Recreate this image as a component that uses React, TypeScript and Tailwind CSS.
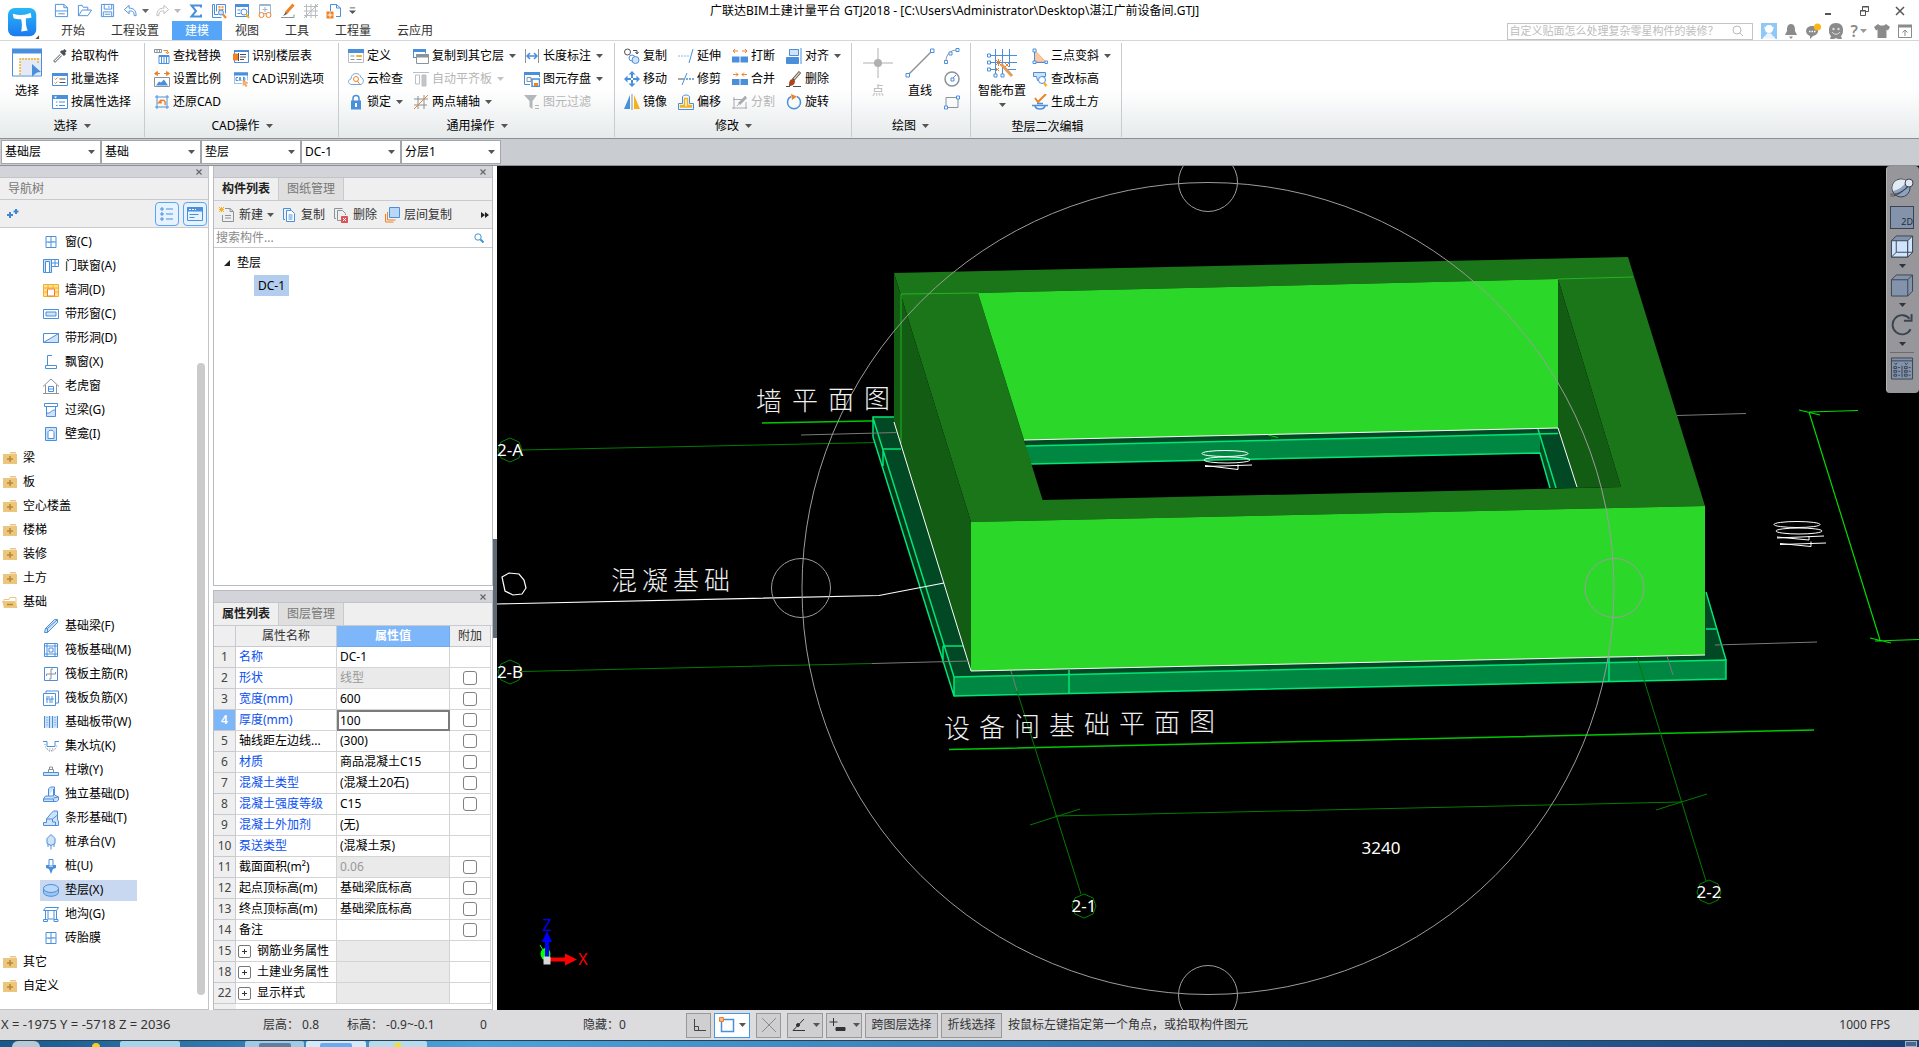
import { Fragment } from "react";
import type { ReactNode } from "react";

const B = "#4a8fdc";
const L = "#cfe2f7";
const O = "#f08124";
const Y = "#f5b21c";
const G = "#8b9298";
const D = "#4a4f55";

// 16x16 drawings used by the ribbon, the tree and the panel toolbars
const ICONS: Record<string, ReactNode> = {
  newFile: <path d="M1.500 1.500h9l4 3.500v9.500h-13zM10.500 1.500V5h4M1.500 8.500h13M4.500 11.500h7" stroke={B} fill="none" />,
  open: <path d="M1.500 13.500v-11h4l1 2h5v3M1.500 13.500l4-6h10l-4 6z" stroke={B} fill="none" />,
  save: <path d="M1.500 1.500h13v13h-13zM4.500 1.500v5h8v-5M9.500 3v2M3.500 14V9.500h9V14M5 12h6" stroke={B} fill="none" />,
  undo: <path d="M6.500 2.500l-5 4.500 5 4.500v-3c4 0 5 0 5.500 5h2c0-6-3-8-7.500-8z" stroke={B} fill="none" />,
  redo: <path d="M9.500 2.500l5 4.500-5 4.500v-3c-4 0-5 0-5.500 5h-2c0-6 3-8 7.500-8z" stroke="#b9bcc0" fill="none" />,
  sigma: <path d="M13 4.500V2.500H3.500L8 8l-4.500 5.500H13v-2" stroke={B} strokeWidth="2" fill="none" />,
  measure: (
    <g fill="none" stroke={B}>
      <path d="M5.500 1.500h9v9M1.500 1.500v13h9M1.500 1.500h2v10h4M5.500 1.500v7" />
      <path d="M7.500 4h5M7.500 6.500h5" stroke={O} strokeDasharray="2 1" strokeWidth="1.500" />
      <circle cx="10" cy="9.500" r="2.500" fill={L} />
      <path d="M12 11.500l3 3.500" stroke={O} strokeWidth="2" />
    </g>
  ),
  findWin: (
    <g fill="none" stroke={B}>
      <path d="M1.500 1.500h13v12h-13z" />
      <path d="M1 2.500h14" strokeWidth="3" />
      <path d="M3.500 7h3M3.500 10.500h3" />
      <circle cx="10" cy="9" r="3" fill="#fff" />
      <path d="M12 11l3 4" stroke={Y} strokeWidth="2" />
    </g>
  ),
  glasses: (
    <g fill="none" stroke="#9fb4cf">
      <path d="M2.500 1.500h11v9h-11zM2 2.500h12M8 4v5M5.500 6.500h5" />
      <circle cx="4.500" cy="12" r="2.500" stroke={O} fill="#fff" />
      <circle cx="11.500" cy="12" r="2.500" stroke={O} fill="#fff" />
    </g>
  ),
  pen: (
    <g fill="none">
      <path d="M13.500 1.500L6 10" stroke={O} strokeWidth="3" />
      <path d="M6 9l-3 4 4-2z" fill={D} />
      <path d="M1 14.500h13v-3" stroke={G} />
    </g>
  ),
  mesh: <path d="M1 3.500h14M1 8h14M1 12.500h14M3.500 1v14M8 1v14M12.500 1v14M1 15L15 1" stroke="#b9bcc0" fill="none" />,
  addDoc: (
    <g fill="none" stroke={B}>
      <path d="M4.500 8V1.500h6l4 3.500v8.500H10M10.500 1.500V5h4" />
      <rect x="0.500" y="8.500" width="7" height="7" fill={O} stroke="none" />
      <path d="M4 9.500v5M1.500 12h5" stroke="#fff" />
    </g>
  ),
  picker: (
    <g fill="none">
      <path d="M9 7l-7 7" stroke={G} strokeWidth="3" />
      <path d="M9 7l-6 6" stroke="#fff" />
      <path d="M9 3l4 4M13.500 2L10 6" stroke={D} strokeWidth="3" />
    </g>
  ),
  batch: (
    <g fill="none" stroke={B}>
      <path d="M.5 2.500h15v12H.5z" fill="#fff" />
      <path d="M0 3.500h16" strokeWidth="3" />
      <path d="M2.500 7.500l1 1 2-2M2.500 11.500l1 1 2-2" stroke={O} />
      <path d="M7.500 8h6M7.500 11.500h6" stroke={D} />
    </g>
  ),
  byProp: (
    <g fill="none" stroke={B}>
      <path d="M.5 1.500h15v13H.5z" fill="#fff" />
      <path d="M0 3h16" strokeWidth="4" />
      <path d="M2 2.500h3L3.500 4.500z" fill="#fff" stroke="none" />
      <path d="M4 8h1.500M4 11.500h1.500M7 8h6M7 11.500h6" />
    </g>
  ),
  replace: (
    <g fill="none">
      <path d="M.5 1.500h7v3h-7zM3 1v3M5.500 1v3" stroke={G} />
      <path d="M9.500 2.500h4v2M12 4l1.500 2L15 4" stroke={O} />
      <path d="M5 7.500h10v8h-10z" stroke={B} fill="#fff" />
      <path d="M5 8h10" stroke={B} strokeWidth="2" />
      <path d="M7.500 9v6M10 9v6M12.500 9v6" stroke={B} />
    </g>
  ),
  floorTbl: (
    <g fill="none" stroke={B}>
      <path d="M1.500 2.500h14v12h-14z" fill="#fff" />
      <path d="M1 3h15" strokeWidth="2" />
      <path d="M.5 6h4v6h-4z" fill={O} stroke={O} />
      <path d="M7 6.500h6M7 9h6M7 11.500h4M5.500 5v8" stroke={D} />
    </g>
  ),
  scale: (
    <g fill="none">
      <path d="M2 2.500h4M10 2.500h4M3.500 .5l-3 2 3 2zM12.500 .5l3 2-3 2z" stroke={O} fill={O} />
      <path d="M.5 6.500h15v9H.5z" stroke={G} fill="#fff" />
      <path d="M2 14.500l3-4 2 1 3-3 4 6z" fill={B} />
    </g>
  ),
  cadOpt: (
    <g fill="none" stroke={B}>
      <path d="M1.500 12.500v-11h13v8M1 12.500h8" strokeOpacity=".5" />
      <path d="M1 3h14" strokeWidth="3" />
      <path d="M5 6.500H3v3h2M6 10l1-4 1 4M10.500 6v4c2 0 2-4 0-4" />
      <path d="M10 9l5 3-2.500.5 1.500 2.500-1.500.5-1-2.500-1.500 1.500z" fill="#f7b58a" stroke={O} strokeWidth=".5" />
    </g>
  ),
  restore: (
    <g fill="none">
      <path d="M3 1v14M13 1v14M1 3h14M1 13h14" stroke={B} />
      <path d="M7 5L3 9.500h5z" fill={O} />
      <path d="M6 7c4-2 6 0 5 4" stroke={O} strokeWidth="1.500" />
    </g>
  ),
  define: (
    <g fill="none" stroke="#b8bdc4">
      <path d="M.5 1.500h15v13H.5z" fill="#fff" />
      <path d="M0 3h16" stroke={B} strokeWidth="4" />
      <path d="M2.500 8h4M2.500 11.500h4" stroke={G} />
      <path d="M8.500 7.500h5v1h-5z" fill={Y} stroke={Y} />
      <path d="M8.500 11.500h5" stroke={G} />
    </g>
  ),
  cloud: (
    <g fill="none" stroke="#6aa6e8">
      <path d="M4 13.500c-4.500 0-4.500-5-1-5.500 0-7 9-7 10-1.500 3.500 1 3 7-1 7z" />
      <circle cx="8" cy="8" r="2.500" stroke={O} />
      <path d="M9.500 10l2 3" stroke={O} />
    </g>
  ),
  lock: (
    <g>
      <path d="M5 7V4.500c0-4 6-4 6 0V7" stroke={B} strokeWidth="1.500" fill="none" />
      <path d="M3 6.500h10v9H3z" fill={B} />
      <path d="M8 9v4" stroke="#fff" strokeWidth="2" />
    </g>
  ),
  copyFloor: (
    <g fill="none">
      <path d="M.5 9.500v-8h12v4M0 9.500h3" stroke={B} />
      <path d="M0 2.500h13" stroke={B} strokeWidth="3" />
      <path d="M3.500 6.500h12v9h-12z" stroke={G} fill="#fff" />
      <path d="M3 8h13" stroke={G} strokeWidth="3" />
    </g>
  ),
  align: (
    <g fill="none" stroke="#bcbfc2">
      <path d="M0 1.500h16M2.500 4v9h4V4z" />
      <path d="M9 4h4v11H9z" fill="#c4c7ca" />
    </g>
  ),
  axis: (
    <g fill="none" stroke={G}>
      <path d="M1 5h14M1 11h13M5 2v13M11 1v14" />
      <path d="M1 15L15 1" stroke={O} />
    </g>
  ),
  dim: <path d="M1.500 1v14M14.500 1v14" stroke={G} fill="none" />,
  dimArrow: <path d="M3 8h10M6 5L3 8l3 3M10 5l3 3-3 3" stroke={B} strokeWidth="1.500" fill="none" />,
  store: (
    <g fill="none" stroke={B}>
      <path d="M6 13.500H.5v-12h15V6" />
      <path d="M0 2.500h16" strokeWidth="3" />
      <path d="M3 6.500h4v4H3z" stroke={G} />
      <path d="M8 8h7.500v7.500H8z" fill="#fff" strokeWidth="1.500" />
      <path d="M10 12h4v3h-4z" fill={O} stroke="none" />
    </g>
  ),
  filter: (
    <g>
      <path d="M0 1h13L8.500 7v8l-3-2V7z" fill="#b4b7ba" />
      <path d="M11 11.500h4M11 14.500h4" stroke="#b4b7ba" />
    </g>
  ),
  copy: (
    <g fill="none">
      <circle cx="3.500" cy="4" r="3" stroke={D} />
      <circle cx="8" cy="10" r="3" stroke={B} />
      <circle cx="11.500" cy="12" r="3.500" stroke={B} fill={L} />
      <path d="M9 2.500h4v3M11.500 4l1.500 2 1.500-2" stroke={D} />
    </g>
  ),
  move: (
    <g fill={B}>
      <path d="M8 0l3.500 3.500h-7zM8 16l3.500-3.500h-7zM0 8l3.500-3.500v7zM16 8l-3.500-3.500v7z" />
      <path d="M8 3v4M8 9v4M3 8h4M9 8h4" stroke={B} strokeWidth="2" />
    </g>
  ),
  mirror: (
    <g>
      <path d="M6 1v14H0z" fill={B} />
      <path d="M10 1v14h6z" fill={Y} />
      <path d="M8 0v16" stroke={G} />
    </g>
  ),
  extend: (
    <g fill="none">
      <path d="M0 8h11" stroke="#8fb4e0" strokeDasharray="2 1" />
      <path d="M15 1l-4 14" stroke={B} />
    </g>
  ),
  trim: (
    <g fill="none">
      <path d="M0 8h6" stroke={D} />
      <path d="M8 8h8" stroke={B} strokeWidth="1.500" strokeDasharray="2 1" />
      <path d="M9 2L4 14" stroke={B} />
    </g>
  ),
  offset: (
    <g fill="none">
      <path d="M.5 9.500h4v-7c2-2 5-2 7 0v7h4v6H.5z" stroke={B} />
      <path d="M2.500 13h11v-1.500h-4V4.500h-3v7h-4z" stroke={Y} strokeWidth="1.500" />
    </g>
  ),
  brk: (
    <g>
      <path d="M0 8.500h7.500v6H0zM8.500 8.500H16v6H8.500z" fill={B} />
      <path d="M1 3h5M10 3h5M3 1L1 3l2 2M13 1l2 2-2 2" stroke={O} fill="none" />
    </g>
  ),
  merge: (
    <g>
      <path d="M0 8h7.500v6H0zM8.500 8H16v6H8.500z" fill={B} />
      <path d="M1 3.500h5M10 3.500h5M4 1.500l2 2-2 2M12 1.500l-2 2 2 2" stroke={O} fill="none" />
    </g>
  ),
  split: (
    <g fill="none" stroke="#a9acaf">
      <path d="M1 5.500h9M0 14h15M2 3v12M14 8v7M5 12L14 2" />
      <path d="M7 10l7-7" strokeWidth="3" />
    </g>
  ),
  alignR: (
    <g stroke={B}>
      <path d="M3.500 1.500h9v6h-9z" fill={L} />
      <path d="M.5 9.500h12v6H.5z" fill={B} />
      <path d="M15 0v16" />
    </g>
  ),
  erase: (
    <g>
      <path d="M14 1L7 9" stroke={D} strokeWidth="3" />
      <path d="M13.500 1.500L8 8" stroke="#e9c9a0" strokeWidth="1.500" />
      <path d="M7 8l2 2c0 4-3 5-6 5 0-3 0-7 4-7z" fill="#a8481c" />
      <path d="M0 15.500h4M7 15.500h8" stroke={D} />
    </g>
  ),
  rotate: (
    <g fill="none">
      <path d="M11 2.500a6.500 6.500 0 1 1-6 0" stroke={B} strokeWidth="1.500" />
      <path d="M5 0l6 2.500L6 6z" fill={O} />
    </g>
  ),
  arc: (
    <g fill="none">
      <path d="M2 13C2 7 6 2 13 2" stroke={G} />
      <path d="M.5 12.500h3v3h-3zM5 4h3v3H5zM12 .5h3v3h-3z" stroke={B} fill="#fff" />
    </g>
  ),
  circle: (
    <g fill="none">
      <circle cx="8" cy="8" r="7" stroke={G} strokeWidth="1.500" />
      <path d="M7 7h3v3H7zM9 7l3-3" stroke={B} />
    </g>
  ),
  rect: (
    <g fill="none">
      <path d="M2 3.500h12v10H2z" stroke={G} />
      <path d="M12.500 2h3v3h-3zM.5 12h3v3h-3z" stroke={B} fill="#fff" />
    </g>
  ),
  slope: (
    <g>
      <path d="M2.500 2v12H14z" fill="#f8c8a8" stroke={O} strokeWidth=".5" />
      <path d="M1 1h3v3H1zM1 13h3v2.500H1zM13 13h2.500v2.500H13zM2.500 4v9M4 14.500h9" stroke={B} fill="#fff" />
    </g>
  ),
  level: (
    <g fill="none" stroke={B}>
      <path d="M1.500 1.500h12v4h-3l-1 4h-4l-1-4h-3z" fill={L} />
      <circle cx="10" cy="9" r="3.500" fill="#fff" />
      <path d="M12 12l2.500 3" stroke={Y} strokeWidth="2.500" />
    </g>
  ),
  earth: (
    <g fill="none">
      <path d="M3 4l3 4 8-8" stroke={O} strokeWidth="2" />
      <path d="M0 11.500h16M3 12c1 4 9 4 10 0M5 9.500h6" stroke={B} strokeWidth="1.500" />
    </g>
  ),
  win: <path d="M3 2.500h10v11H3zM8 2.500v11M3 8h10M6 8v1M10 7v1" stroke={B} fill="#fff" />,
  doorWin: (
    <g stroke={B}>
      <path d="M.5 1.500h8v13h-8z" fill={L} />
      <path d="M2.500 3.500h4v11h-4z" fill="#fff" />
      <path d="M8.500 1.500h7v7h-7zM12 2v6M9 5h6" fill="none" />
    </g>
  ),
  hole: (
    <g stroke={Y}>
      <path d="M.5 2.500h15v12H.5zM1 6h14M1 10h14M5 3v3M10 3v3" fill="#fde0a4" />
      <path d="M4.500 7h7v7h-7z" fill="#fff" stroke={O} />
    </g>
  ),
  strip: (
    <g stroke={B}>
      <path d="M.5 3.500h15v9H.5z" fill="#fff" />
      <path d="M3 6h10v4H3z" fill={L} />
    </g>
  ),
  stripHole: (
    <g stroke={B}>
      <path d="M.5 3.500h15v9H.5z" fill="#fff" />
      <path d="M.5 12.500l15-9v9z" fill={L} />
    </g>
  ),
  bay: <path d="M9 1.500H4.500v10M2.500 11.500h11v3h-11z" stroke={B} fill="none" />,
  house: (
    <g fill="none" stroke={G}>
      <path d="M0 8.500L8 1l8 7.500M2.500 7v8M13.500 7v8M0 15.500h16" />
      <path d="M5.500 8.500h5v5h-5zM6 11h4" stroke={B} />
    </g>
  ),
  lintel: (
    <g stroke={B} fill="none">
      <path d="M1.500 1.500h13v3h-13zM3.500 4.500h9v10h-9z" />
      <path d="M4 11c3 1 4-3 8-3v6H4z" fill={L} stroke="none" />
      <path d="M4 11c3 1 4-3 8-3" />
    </g>
  ),
  niche: (
    <g stroke={B}>
      <path d="M2.500 1.500h11v13h-11z" fill={L} />
      <path d="M5 12.500v-6c0-3 6-3 6 0v6z" fill="#fff" />
    </g>
  ),
  beam: <path d="M1.500 14.500l1-4 9-9h3v3l-10 10zM2.500 10.500h2v4M5 10l9-8" stroke={B} fill={L} />,
  raft: <path d="M1.500 1.500h13v13h-13zM1 4h14M1 12h14M4 1v14M12 1v14M6 6h4v4H6z" stroke={B} fill="none" />,
  raftMain: (
    <g fill="none">
      <path d="M1.500 1.500h13v13h-13z" stroke={B} />
      <path d="M8 3v10M3.500 8h9M8 3h2M3.500 10V8M12.500 6v2M6 13h2" stroke={G} />
    </g>
  ),
  raftNeg: (
    <g fill="none" stroke={B}>
      <path d="M.5 3.500h12v12H.5zM3 3V1h12.500v12H13" />
      <path d="M4 6v7M3 9h8M9 6v7M6 6v2M7 9v4" />
    </g>
  ),
  band: (
    <g>
      <path d="M1 2h14v12H1z" fill={L} />
      <path d="M1.500 2v12M6.500 2v12M9.500 2v12M14.500 2v12" stroke={B} />
      <path d="M4 3v10M12 3v10" stroke={B} strokeDasharray="1 1.500" />
    </g>
  ),
  pit: (
    <g fill="none" stroke={B}>
      <path d="M0 3.500h4v5h8v-5h4" />
      <path d="M2 6c0 9 12 9 12 0M4 11h8M6 13h5" stroke={G} strokeDasharray="1 1.500" />
    </g>
  ),
  pier: (
    <g fill="none">
      <path d="M.5 10.500h15v3H.5z" stroke={B} fill={L} />
      <path d="M5.500 10V7.500h5V10M6.500 7V5h3v2" stroke={G} />
    </g>
  ),
  isoFound: <path d="M.5 13l2-3h3V3l2-2h4v8l4 2v3l-2 1.500H.5zM5.500 10h5V3M10.500 12l5-1M.5 13h10v2" stroke={B} fill={L} />,
  stripFound: <path d="M.5 15.500v-3h3V9l4-5 3-3h4v9l1 1v4.500zM3.500 9h6v3h3v3M9.500 9l5-4" stroke={B} fill={L} />,
  pileCap: <path d="M8 .5l4 4v5l-4 2-4-2v-5zM8 11v4.500M5 10v3M11 10v3" stroke={B} fill={L} />,
  pile: (
    <g fill={B}>
      <path d="M6 1.500h4V8H6z" fill="#fff" stroke={B} />
      <path d="M3 7h3v2h4V7h3v3l-3 1-2 5-2-5-3-1z" />
    </g>
  ),
  cushion: (
    <g stroke={B}>
      <path d="M.5 6.500v4c1 5 14 5 15 0v-4" fill="#9cc5f2" />
      <ellipse cx="8" cy="6.500" rx="7.500" ry="4" fill="#b9d7f6" />
    </g>
  ),
  trench: <path d="M.5 4.500l2-3h13l-2 3zM2.500 4.500v9M5 5v8M11 5v8M13.500 5v9M.5 13.500h4v2h-4zM11 13.500h4v2h-4zM5 13h6" stroke={B} fill="none" />,
  folder: (
    <g>
      <path d="M1 4h14v10H1zM8 2h6v1.500H8z" fill="#ecc57f" />
      <path d="M8 6v6M5 9h6" stroke="#b8892f" strokeWidth="1.500" />
    </g>
  ),
  folderOpen: (
    <g>
      <path d="M2 13.500V5.500h5l1-2h6v10z" fill="none" stroke="#ecc57f" />
      <path d="M0 7h13l2.500 7H2.500z" fill="#ecc57f" />
      <path d="M5 10.500h6" stroke="#b8892f" strokeWidth="1.500" />
    </g>
  ),
  newItem: (
    <g fill="none" stroke={G}>
      <path d="M6 1.500h5l3.500 3v10h-11V8M11 1.500v3h3M6 8.500h6M6 11h6" />
      <path d="M0 0l5 5M5 0L0 5M2.500 0v5M0 2.500h5" stroke={Y} />
    </g>
  ),
  copyDoc: (
    <g fill="none" stroke={B}>
      <path d="M4 12.500H2.500v-11h7V3" />
      <path d="M5.500 3.500h5l3 3v8h-8zM7.500 8h4M7.500 10h4M7.500 12h4" fill="#fff" />
    </g>
  ),
  delDoc: (
    <g fill="none" stroke={G}>
      <path d="M3 11.500H1.500v-10h8" />
      <path d="M8 13.500H4.500v-10h5l3 3V8" />
      <path d="M8.500 9.500h6v6h-6z" fill="#d9555a" stroke="#d9555a" />
      <path d="M10 11l3 3M13 11l-3 3" stroke="#fff" />
    </g>
  ),
  layerCopy: (
    <g fill="none">
      <path d="M5.500 .5h10v10h-10z" stroke={B} fill="#b9d7f6" />
      <path d="M3.500 5v8h8M1.500 7v8h8" stroke={O} />
    </g>
  ),
};

function Ico({ name, className = "size-4" }: { name: string; className?: string }) {
  return (
    <svg viewBox="0 0 16 16" className={`${className} shrink-0`} aria-hidden="true">
      {ICONS[name]}
      {name === "dim" && ICONS.dimArrow}
    </svg>
  );
}

function Caret({ className = "text-[#555]" }: { className?: string }) {
  return (
    <svg viewBox="0 0 7 4" className={`h-1 w-[7px] shrink-0 ${className}`} aria-hidden="true">
      <path d="M0 0h7L3.500 4z" fill="currentColor" />
    </svg>
  );
}

type ToolItem = { icon: string; label: string; menu?: boolean; off?: boolean };

function Tool({ icon, label, menu, off }: ToolItem) {
  return (
    <button
      type="button"
      disabled={off}
      className={`flex h-[23px] items-center gap-[3px] whitespace-nowrap ${off ? "text-[#b5b5b5]" : "text-black"}`}
    >
      <Ico name={icon} />
      <span>{label}</span>
      {menu && <Caret className={off ? "ml-0.5 text-[#c4c4c4]" : "ml-0.5 text-[#555]"} />}
    </button>
  );
}

function Column({ items }: { items: ToolItem[] }) {
  return (
    <div className="flex flex-col items-start">
      {items.map((item) => (
        <Tool key={item.label} {...item} />
      ))}
    </div>
  );
}

function Group({ label, menu = true, className, children }: { label: string; menu?: boolean; className: string; children: ReactNode }) {
  return (
    <section className={`mt-0.5 mb-px flex shrink-0 flex-col border-r border-[#c9cccf] pt-px ${className}`}>
      <div className="flex h-[69px] items-start">{children}</div>
      <div className={`flex h-6 items-center justify-center gap-1.5 ${menu ? "pt-0.5 pr-2" : "pt-1 pr-1"}`}>
        {label}
        {menu && <Caret />}
      </div>
    </section>
  );
}

function BigTool({ label, off, menu, className = "w-[38px]", children }: { label: string; off?: boolean; menu?: boolean; className?: string; children: ReactNode }) {
  return (
    <button type="button" disabled={off} className={`flex flex-col items-center pt-1 whitespace-nowrap ${off ? "text-[#b5b5b5]" : ""} ${className}`}>
      <svg viewBox="0 0 30 30" className="size-[30px]" fill="none" aria-hidden="true">
        {children}
      </svg>
      <span className="mt-[5px]">{label}</span>
      {menu && <Caret className="mt-1 text-[#555]" />}
    </button>
  );
}

const TABS = ["开始", "工程设置", "建模", "视图", "工具", "工程量", "云应用"];

function TitleBar() {
  return (
    <header className="flex h-[41px] border-b border-[#d4d6d8] bg-white">
      <div className="flex w-12 shrink-0 items-start pt-2 pl-2">
        <svg viewBox="0 0 34 34" className="size-8" aria-hidden="true">
          <defs>
            <linearGradient id="logo" x1="0" y1="0" x2="0" y2="1">
              <stop offset="0" stopColor="#27b8f8" />
              <stop offset="1" stopColor="#1c7af0" />
            </linearGradient>
          </defs>
          <rect width="30" height="30" rx="7" fill="url(#logo)" />
          <path d="M5 6c7 2 13 2 19-1l1 5c-3 1-5 1-6 1 0 5 0 9 2 13l-7 1c1-4 1-9 0-13-4 0-6 0-8-1z" fill="#fff" />
          <path d="M33 29v4h-4z" fill="#555" />
        </svg>
      </div>
      <div className="flex shrink-0 flex-col">
        <div className="flex h-[22px] items-center pl-1.5">
          {["newFile", "open", "save", "undo"].map((name) => (
            <button key={name} type="button" aria-label={name} className="w-[23px]">
              <Ico name={name} className="size-[15px]" />
            </button>
          ))}
          <Caret className="-ml-1 text-[#666]" />
          <button type="button" aria-label="redo" className="ml-1.5">
            <Ico name="redo" className="size-[15px]" />
          </button>
          <Caret className="ml-1 text-[#bbb]" />
          <div className="ml-[7px] flex">
            {["sigma", "measure", "findWin", "glasses", "pen", "mesh", "addDoc"].map((name) => (
              <button key={name} type="button" aria-label={name} className="w-[23px]">
                <Ico name={name} className="size-4" />
              </button>
            ))}
          </div>
          <svg viewBox="0 0 8 8" className="size-[7px]" aria-hidden="true">
            <path d="M1 1h6" stroke="#555" />
            <path d="M0 4h8L4 8z" fill="#555" />
          </svg>
        </div>
        <nav className="flex">
          {TABS.map((tab) => (
            <button key={tab} type="button" className={`h-[19px] px-[13px] ${tab === "建模" ? "bg-[#55a5f8] text-white" : "text-[#333]"}`}>
              {tab}
            </button>
          ))}
        </nav>
      </div>
      <h1 className="min-w-0 flex-1 truncate pt-[3px] pl-[264px] text-xs">
        广联达BIM土建计量平台 GTJ2018 - [C:\Users\Administrator\Desktop\湛江广前设备间.GTJ]
      </h1>
      <div className="flex shrink-0 flex-col items-end pr-1.5">
        <div className="flex h-[22px] items-center gap-6 pr-[7px] text-[#555]">
          <button type="button" aria-label="最小化">
            <svg viewBox="0 0 12 12" className="size-3"><path d="M3 9h6" stroke="currentColor" strokeWidth="2" /></svg>
          </button>
          <button type="button" aria-label="还原">
            <svg viewBox="0 0 12 12" className="size-3" fill="none"><path d="M4.500 5V1.500h6v5H8M2.500 5.500h5v5h-5zM2 6h6M4 2h7" stroke="currentColor" /></svg>
          </button>
          <button type="button" aria-label="关闭">
            <svg viewBox="0 0 12 12" className="size-3"><path d="M2 2l8 8M10 2l-8 8" stroke="currentColor" strokeWidth="1.500" /></svg>
          </button>
        </div>
        <div className="flex h-[18px] items-center">
          <label className="mr-2 flex h-[17px] w-[246px] items-center border border-[#c4c4c4] px-0.5">
            <input aria-label="搜索" placeholder="自定义贴面怎么处理复杂零星构件的装修？" className="min-w-0 flex-1 text-[11px] outline-none placeholder:text-[#bdbdbd]" />
            <svg viewBox="0 0 12 12" className="mr-1.5 size-3" fill="none" stroke="#bbb"><circle cx="5" cy="5" r="4" /><path d="M8 8l3 3" /></svg>
          </label>
          <div className="flex items-center gap-[7px]">
            <svg viewBox="0 0 16 16" className="size-4"><path d="M0 0h16v16H0z" fill="#8fc7f7" /><circle cx="8" cy="6" r="4" fill="#fff" /><path d="M2 16c1-3 4-3 4-5h4c0 2 3 2 4 5zM3 5h10" fill="#e8f4fe" stroke="#fff" /></svg>
            <svg viewBox="0 0 14 16" className="h-4 w-3.5" fill="#8b8b8b"><path d="M7 1c4 0 4 4 4 7l2 4H1l2-4c0-3 0-7 4-7zM5 13.500h4L7 16z" /></svg>
            <svg viewBox="0 0 16 16" className="size-4"><path d="M7 3c8 0 8 9 1 10l-3 3v-3C-1 11 0 3 7 3z" fill="#8b8b8b" /><path d="M4 8.500h7" stroke="#fff" strokeWidth="1.500" strokeDasharray="1.500 1" /><circle cx="12.500" cy="4" r="3.500" fill="#fbb615" /></svg>
            <svg viewBox="0 0 16 16" className="size-4"><path d="M8 0c5 0 7 3 7 7s-1 5-2 6l1 3h-4l-2-1-2 1H2l1-3C2 12 1 11 1 7s2-7 7-7z" fill="#8b8b8b" /><circle cx="5.500" cy="6" r="1.200" fill="#ddd" /><circle cx="10.500" cy="6" r="1.200" fill="#ddd" /><path d="M4 9c2 3 6 3 8 0" stroke="#ddd" fill="none" /></svg>
            <button type="button" className="flex items-center gap-0.5 text-base leading-4 font-semibold text-[#8b8b8b]">?<Caret className="text-[#999]" /></button>
            <svg viewBox="0 0 16 16" className="size-4"><path d="M4 1l2 1.500h4L12 1l4 3-2 3.500-1.500-1V15h-9V6.500L2 7.500 0 4z" fill="#8b8b8b" /></svg>
            <svg viewBox="0 0 16 16" className="size-4" fill="none" stroke="#8b8b8b"><path d="M1.500 3.500h13v11h-13z" /><path d="M1 3h14" strokeWidth="3" /><path d="M8 13V7M5.500 9.500L8 7l2.500 2.500" /></svg>
          </div>
        </div>
      </div>
    </header>
  );
}

function Ribbon() {
  return (
    <div className="flex border-b border-[#8b9095] bg-linear-to-b from-white from-50% to-[#e6eaeb]">
      <Group label="选择" className="w-[145px] pl-2">
        <BigTool label="选择">
          <path d="M.5 2v26h29V2z" fill="#fff" stroke={B} />
          <path d="M8 10h21v17H8z" fill="#e4e9f5" />
          <path d="M0 3h30" stroke={B} strokeWidth="5" />
          <path d="M8 27V11h18v4" stroke={Y} strokeWidth="1.500" strokeDasharray="2 1" />
          <path d="M20 16l9 8-4 .5-5 4z" fill={B} />
        </BigTool>
        <div className="ml-1.5">
          <Column items={[{ icon: "picker", label: "拾取构件" }, { icon: "batch", label: "批量选择" }, { icon: "byProp", label: "按属性选择" }]} />
        </div>
      </Group>
      <Group label="CAD操作" className="w-[194px] pl-[9px]">
        <div className="flex gap-3">
          <Column items={[{ icon: "replace", label: "查找替换" }, { icon: "scale", label: "设置比例" }, { icon: "restore", label: "还原CAD" }]} />
          <Column items={[{ icon: "floorTbl", label: "识别楼层表" }, { icon: "cadOpt", label: "CAD识别选项" }]} />
        </div>
      </Group>
      <Group label="通用操作" className="w-[276px] pl-[9px]">
        <Column items={[{ icon: "define", label: "定义" }, { icon: "cloud", label: "云检查" }, { icon: "lock", label: "锁定", menu: true }]} />
        <div className="ml-2.5">
          <Column
            items={[
              { icon: "copyFloor", label: "复制到其它层", menu: true },
              { icon: "align", label: "自动平齐板", menu: true, off: true },
              { icon: "axis", label: "两点辅轴", menu: true },
            ]}
          />
        </div>
        <div className="ml-2">
          <Column items={[{ icon: "dim", label: "长度标注", menu: true }, { icon: "store", label: "图元存盘", menu: true }, { icon: "filter", label: "图元过滤", off: true }]} />
        </div>
      </Group>
      <Group label="修改" className="w-[237px] pl-[9px]">
        <div className="flex gap-[11px]">
          <Column items={[{ icon: "copy", label: "复制" }, { icon: "move", label: "移动" }, { icon: "mirror", label: "镜像" }]} />
          <Column items={[{ icon: "extend", label: "延伸" }, { icon: "trim", label: "修剪" }, { icon: "offset", label: "偏移" }]} />
          <Column items={[{ icon: "brk", label: "打断" }, { icon: "merge", label: "合并" }, { icon: "split", label: "分割", off: true }]} />
          <Column items={[{ icon: "alignR", label: "对齐", menu: true }, { icon: "erase", label: "删除" }, { icon: "rotate", label: "旋转" }]} />
        </div>
      </Group>
      <Group label="绘图" className="w-[119px] pl-[7px]">
        <BigTool label="点" off>
          <path d="M15 0v30M0 15h30" stroke="#b0b0b0" />
          <circle cx="15" cy="15" r="4" fill="#b0b0b0" />
        </BigTool>
        <BigTool label="直线" className="ml-1 w-[38px]">
          <path d="M3 27L27 3" stroke={G} strokeWidth="1.500" />
          <path d="M1 25.500h3.500V29H1zM25.500 1H29v3.500h-3.500z" stroke={B} fill="#fff" />
        </BigTool>
        <div className="ml-[5px] flex flex-col">
          {["arc", "circle", "rect"].map((name) => (
            <button key={name} type="button" aria-label={name} className="flex h-[23px] items-center">
              <Ico name={name} />
            </button>
          ))}
        </div>
      </Group>
      <Group label="垫层二次编辑" menu={false} className="w-[151px] pl-[7px]">
        <BigTool label="智能布置" menu className="w-12">
          <path d="M2 7.500h28M2 14.500h28M2 21.500h8M20 21.500h9M8.500 1v28M15.500 1v28M22.500 1v18" stroke={B} />
          <path d="M.5 6h3v3h-3zM.5 13h3v3h-3zM.5 20h3v3h-3zM7 26h3v3H7zM14 26h3v3h-3z" fill="#fff" stroke={B} />
          <path d="M14 16l11 12" stroke="#e59a57" strokeWidth="3" />
          <path d="M9 12l5 5M14 12l-5 5M11.500 11v7M18 15l4 4M22 15l-4 4M9 20l3 3M12 20l-3 3" stroke={O} />
        </BigTool>
        <div className="ml-1.5">
          <Column items={[{ icon: "slope", label: "三点变斜", menu: true }, { icon: "level", label: "查改标高" }, { icon: "earth", label: "生成土方" }]} />
        </div>
      </Group>
    </div>
  );
}

const SELECTORS = [
  { name: "楼层", value: "基础层" },
  { name: "类别", value: "基础" },
  { name: "类型", value: "垫层" },
  { name: "构件", value: "DC-1" },
  { name: "分层", value: "分层1" },
];

function SelectorBar() {
  return (
    <div className="flex h-[27px] items-center border-b border-[#8b9095] bg-[#c9ccd1] pl-px">
      {SELECTORS.map(({ name, value }) => (
        <div key={name} className="relative flex w-[100px] items-center">
          <select aria-label={name} className="h-6 w-full appearance-none border border-[#a3a6aa] bg-white pl-[3px] text-black">
            <option>{value}</option>
          </select>
          <Caret className="pointer-events-none absolute right-1.5 text-[#555]" />
        </div>
      ))}
    </div>
  );
}

type TreeRow = { label: string; icon?: string; open?: boolean };

const TREE: TreeRow[] = [
  { label: "窗(C)", icon: "win" },
  { label: "门联窗(A)", icon: "doorWin" },
  { label: "墙洞(D)", icon: "hole" },
  { label: "带形窗(C)", icon: "strip" },
  { label: "带形洞(D)", icon: "stripHole" },
  { label: "飘窗(X)", icon: "bay" },
  { label: "老虎窗", icon: "house" },
  { label: "过梁(G)", icon: "lintel" },
  { label: "壁龛(I)", icon: "niche" },
  { label: "梁" },
  { label: "板" },
  { label: "空心楼盖" },
  { label: "楼梯" },
  { label: "装修" },
  { label: "土方" },
  { label: "基础", open: true },
  { label: "基础梁(F)", icon: "beam" },
  { label: "筏板基础(M)", icon: "raft" },
  { label: "筏板主筋(R)", icon: "raftMain" },
  { label: "筏板负筋(X)", icon: "raftNeg" },
  { label: "基础板带(W)", icon: "band" },
  { label: "集水坑(K)", icon: "pit" },
  { label: "柱墩(Y)", icon: "pier" },
  { label: "独立基础(D)", icon: "isoFound" },
  { label: "条形基础(T)", icon: "stripFound" },
  { label: "桩承台(V)", icon: "pileCap" },
  { label: "桩(U)", icon: "pile" },
  { label: "垫层(X)", icon: "cushion" },
  { label: "地沟(G)", icon: "trench" },
  { label: "砖胎膜", icon: "win" },
  { label: "其它" },
  { label: "自定义" },
];

function DockHeader() {
  return (
    <div className="flex h-3 shrink-0 items-center justify-end border-b border-[#c3c4c9] bg-[#d3d4da] pr-1.5">
      <button type="button" aria-label="关闭面板">
        <svg viewBox="0 0 6 6" className="size-1.5"><path d="M.5 .5l5 5M5.500 .5l-5 5" stroke="#666" strokeWidth="1.200" /></svg>
      </button>
    </div>
  );
}

function NavTree() {
  return (
    <aside className="flex w-[209px] shrink-0 flex-col border-r border-b border-[#c3c4c9] bg-white">
      <DockHeader />
      <h2 className="flex h-[22px] shrink-0 items-center border-b border-[#c9cacf] bg-[#efefef] pl-2 text-[#777]">导航树</h2>
      <div className="flex h-7 shrink-0 items-center gap-1 border-b border-[#c9cacf] bg-[#efefef] pr-px pl-[7px]">
        <svg viewBox="0 0 12 12" className="mr-auto size-3" stroke="#3f86d8" strokeWidth="2"><path d="M3 4v6M0 7h6M9 1v5M6.500 3.500h5" /></svg>
        <button type="button" aria-label="列表" className="flex size-6 items-center justify-center rounded-sm border border-[#55a5f8] bg-[#e6f2fe]">
          <svg viewBox="0 0 14 14" className="size-3.5" fill="none" stroke={B}><path d="M1 1h2v2H1zM1 6h2v2H1zM1 11h2v2H1zM6 2h7M6 7h7M6 12h7" /></svg>
        </button>
        <button type="button" aria-label="窗口" className="flex size-6 items-center justify-center rounded-sm border border-[#55a5f8] bg-[#e6f2fe]">
          <svg viewBox="0 0 16 14" className="h-3.5 w-4" fill="none" stroke={B}><path d="M.5 .5h15v13H.5zM2.500 7.500h9M2.500 10.500h5" /><path d="M0 2.500h16" strokeWidth="4" /><path d="M2 2.500h7" stroke="#fff" strokeDasharray="2 1" /></svg>
        </button>
      </div>
      <div className="flex min-h-0 flex-1">
        <ul className="min-w-0 flex-1 overflow-hidden pt-0.5">
          {TREE.map(({ label, icon, open }) => (
            <li key={label} className={`flex h-6 items-center ${icon ? "pl-10" : "pl-0"}`}>
              <button
                type="button"
                className={`flex h-[21px] items-center ${icon ? "min-w-[97px] gap-1.5 px-[3px]" : "gap-[5px] pl-0.5"} ${label === "垫层(X)" ? "bg-[#c8d8f0]" : ""}`}
              >
                <Ico name={icon ?? (open ? "folderOpen" : "folder")} />
                {label}
              </button>
            </li>
          ))}
        </ul>
        <div className="mt-[135px] mr-[3px] mb-3.5 w-2 rounded-full bg-[#cbcbcb]" />
      </div>
    </aside>
  );
}

function DockTabs({ tabs }: { tabs: [string, string] }) {
  return (
    <div className="flex h-[23px] shrink-0 border-b border-[#c9cacf] bg-[#efefef]">
      <button type="button" className="px-2 font-semibold text-[#222]">{tabs[0]}</button>
      <button type="button" className="border-x border-[#c9cacf] bg-[#dfdfdf] px-2 text-[#777]">{tabs[1]}</button>
    </div>
  );
}

function ComponentList() {
  return (
    <section className="flex min-h-0 flex-1 flex-col border-x border-b border-[#b9bbc0] bg-white">
      <DockHeader />
      <DockTabs tabs={["构件列表", "图纸管理"]} />
      <div className="flex h-7 shrink-0 items-center border-b border-[#c9cacf] bg-[#efefef] pr-[3px] pl-[5px] text-[#333]">
        <button type="button" className="flex items-center gap-1"><Ico name="newItem" />新建<Caret className="text-[#555]" /></button>
        <button type="button" className="ml-[7px] flex items-center gap-1"><Ico name="copyDoc" />复制</button>
        <button type="button" className="ml-2 flex items-center gap-1"><Ico name="delDoc" />删除</button>
        <button type="button" className="ml-[7px] flex items-center gap-1"><Ico name="layerCopy" />层间复制</button>
        <svg viewBox="0 0 8 6" className="ml-auto h-1.5 w-2" fill="#222"><path d="M0 0l4 3-4 3zM4 0l4 3-4 3z" /></svg>
      </div>
      <label className="flex h-[19px] shrink-0 items-center border-b border-[#c9cacf] pr-2">
        <input aria-label="搜索构件" placeholder="搜索构件..." className="min-w-0 flex-1 pl-0.5 outline-none placeholder:text-[#8a8a8a]" />
        <svg viewBox="0 0 10 10" className="size-2.5" fill="none" stroke="#3f95d0"><circle cx="4" cy="4" r="3.200" /><path d="M6.500 6.500L9.500 9.500" strokeWidth="2" /></svg>
      </label>
      <div className="pt-[3px] pl-2.5">
        <div className="flex h-6 items-center gap-[7px]">
          <svg viewBox="0 0 6 6" className="size-1.5"><path d="M6 0v6H0z" fill="#222" /></svg>
          垫层
        </div>
        <button type="button" className="ml-[30px] block h-[21px] bg-[#b3cdee] px-1">DC-1</button>
      </div>
    </section>
  );
}

type PropRow = { no: number; name: string; value?: string; blue?: boolean; gray?: boolean; check?: boolean; expand?: boolean };

const PROPS: PropRow[] = [
  { no: 1, name: "名称", value: "DC-1", blue: true },
  { no: 2, name: "形状", value: "线型", blue: true, gray: true, check: true },
  { no: 3, name: "宽度(mm)", value: "600", blue: true, check: true },
  { no: 4, name: "厚度(mm)", value: "100", blue: true, check: true },
  { no: 5, name: "轴线距左边线...", value: "(300)", check: true },
  { no: 6, name: "材质", value: "商品混凝土C15", blue: true, check: true },
  { no: 7, name: "混凝土类型", value: "(混凝土20石)", blue: true, check: true },
  { no: 8, name: "混凝土强度等级", value: "C15", blue: true, check: true },
  { no: 9, name: "混凝土外加剂", value: "(无)", blue: true },
  { no: 10, name: "泵送类型", value: "(混凝土泵)", blue: true },
  { no: 11, name: "截面面积(m²)", value: "0.06", gray: true, check: true },
  { no: 12, name: "起点顶标高(m)", value: "基础梁底标高", check: true },
  { no: 13, name: "终点顶标高(m)", value: "基础梁底标高", check: true },
  { no: 14, name: "备注", check: true },
  { no: 15, name: "钢筋业务属性", gray: true, expand: true },
  { no: 18, name: "土建业务属性", gray: true, expand: true },
  { no: 22, name: "显示样式", gray: true, expand: true },
];

function PropertyList() {
  return (
    <section className="flex shrink-0 flex-col border border-[#b9bbc0] bg-white">
      <DockHeader />
      <DockTabs tabs={["属性列表", "图层管理"]} />
      <div className="bg-linear-to-r from-[#efefef] from-[22px] to-white to-[22px] pb-[5px]">
        <table className="w-[277px] table-fixed border-separate border-spacing-0 bg-white">
          <colgroup>
            <col className="w-[22px]" />
            <col className="w-[101px]" />
            <col className="w-[113px]" />
            <col className="w-[41px]" />
          </colgroup>
          <thead>
            <tr className="h-[21px] bg-[#efefef] text-[#333]">
              <th className="border-r border-b border-[#c9cacf]" aria-label="序号" />
              <th className="border-r border-b border-[#c9cacf] font-normal">属性名称</th>
              <th className="border-r border-b border-[#6fabf0] bg-[#7db6f9] font-semibold text-white">属性值</th>
              <th className="border-r border-b border-[#c9cacf] font-normal">附加</th>
            </tr>
          </thead>
          <tbody>
            {PROPS.map((row) => (
              <tr key={row.no} className="h-[21px]">
                <td className={`border-r border-b border-[#c9cacf] text-center ${row.no === 4 ? "bg-[#7db6f9] font-semibold text-white" : "bg-[#efefef] text-[#444]"}`}>{row.no}</td>
                <td className={`border-r border-b border-[#d4d4d4] whitespace-nowrap ${row.expand ? "pl-0.5" : "pl-[3px]"} ${row.blue ? "text-[#0a50f0]" : "text-black"}`}>
                  {row.expand ? (
                    <span className="flex items-center gap-1.5">
                      <button type="button" aria-label={`展开${row.name}`} className="flex size-[13px] items-center justify-center rounded-xs border border-[#777]">
                        <svg viewBox="0 0 7 7" className="size-[7px]" stroke="#333"><path d="M1 3.500h5M3.500 1v5" /></svg>
                      </button>
                      {row.name}
                    </span>
                  ) : (
                    row.name
                  )}
                </td>
                <td
                  className={`whitespace-nowrap ${row.no === 4 ? "border-2 border-[#7b7b7b] pl-px" : "border-r border-b border-[#d4d4d4] pl-[3px]"} ${row.gray ? "bg-[#eaeaea] text-[#999]" : "text-black"}`}
                >
                  {row.value}
                </td>
                <td className="border-r border-b border-[#d4d4d4]">
                  {row.check && <input type="checkbox" aria-label={`附加${row.name}`} className="mx-auto block size-3.5 appearance-none rounded-[3px] border border-[#808080] bg-white" />}
                </td>
              </tr>
            ))}
          </tbody>
        </table>
      </div>
    </section>
  );
}

// the letters climb a little from left to right
function CadText({ text, x, y, step, rise }: { text: string; x: number; y: number; step: number; rise: number }) {
  return (
    <g fill="#f0f0f0" fontSize="26" fontWeight="300">
      {[...text].map((ch, i) => (
        <text key={i} x={x + i * step} y={y - i * rise}>{ch}</text>
      ))}
    </g>
  );
}

const AXES = [
  { label: "2-A", x: 510, y: 450 },
  { label: "2-B", x: 510, y: 672 },
  { label: "2-1", x: 1084, y: 906 },
  { label: "2-2", x: 1709, y: 892 },
];

function Viewport() {
  return (
    <svg viewBox="497 166 1422 844" preserveAspectRatio="xMidYMid slice" className="absolute inset-0 size-full" fill="none">
      {/* grid lines and dimensions */}
      <g stroke="#007c00">
        <path d="M522 450L901 442M522 671.500L872 663.500" />
        <path d="M1055 816L1681 802M1030 825l50-16M1656 810l51-16" />
      </g>
      <path d="M762 423L894 420.500M949 749.500L1814 730" stroke="#00c800" strokeWidth="1.500" />
      <path d="M1799 410l21 5M1809 412l49-1.500M1809 412L1880 640M1870 638l21 5M1875 641l44-1.500" stroke="#00dc00" strokeWidth="1.200" />
      <path d="M1677 415.500L1746 413.500" stroke="#7a7a7a" />

      {/* cushion */}
      <path d="M873 417h21v5L971 671 1705 655V592L1726 660 954 677z" fill="#004924" />
      <path d="M873 417L954 677v19L873 437z" fill="#00381b" />
      <path d="M954 677L1726 660v19L954 696z" fill="#008742" />
      <path
        d="M894 417h-21v20L954 696 1726 679v-19L954 677 873 418M954 677v19M883 449h18M883 449v17M943 646h20M943 646v17M1069 670v23M1609 658v23M1706 592L1726 660M1706 629h10"
        stroke="#00e676"
        strokeWidth="1.500"
      />
      <path d="M1024 440L1558 428 1577 488H1550L1540 453 1031 464z" fill="#004924" />
      <path d="M1025 446L1540 434v19L1031 464z" fill="#008742" />
      <path d="M1025 446L1558 433.500M1031 464L1540 453 1550 488M1538 429L1556 488" stroke="#00e676" strokeWidth="1.500" />

      {/* walls */}
      <path d="M894 273L1628 257 1705 506 971 522zM978 293l64.600 207L1621 487 1558 279z" fill="#1a7619" fillRule="evenodd" />
      <path d="M978 293L1558 279v149L1024 440z" fill="#2bd829" />
      <path d="M1558 279L1621 487 1577 488 1558 428z" fill="#135c13" />
      <path d="M894 273L971 522V671L894 422z" fill="#135c13" />
      <path d="M971 522L1705 506V655L971 671z" fill="#2bd829" />
      <path d="M901 443V294L978 293M1558 279L1633 277" stroke="#24b322" />
      <path d="M894 422L971 671 1705 655M1024 440L1558 428 1577 487" stroke="#fff" />
      <path d="M801 435L897 432.500M872 663.500L969 661M1011 671l6 20M1715 645L1817 642M1667 656l6 19" stroke="#7a7a7a" />
      <path d="M1017 691L1081 894M1637 657L1706 881" stroke="#007c00" />
      <path d="M1268 435l10 2.500" stroke="#00dc00" />

      {/* leader and level marks */}
      <path d="M497 604L879 595.500 944 583M502 577l7-4 10 1 5 6 2 8-4 6-9 1-8-4z" stroke="#fff" strokeWidth="1.200" />
      <g stroke="#fff">
        <ellipse cx="1225" cy="453.500" rx="23" ry="3" />
        <ellipse cx="1227" cy="460" rx="23" ry="3" />
        <path d="M1205 465.500l33 4v-5M1205 466.500l47-1.500" />
        <ellipse cx="1797" cy="524.500" rx="23" ry="3" />
        <ellipse cx="1799" cy="531" rx="23" ry="3" />
        <path d="M1777 537l32 3v-4M1777 538l47-2M1780 543.500l31 3v-5M1780 544.500l46-1.500" />
      </g>

      {/* orbit ring */}
      <g stroke="#9c9c9c">
        <circle cx="1208" cy="588.500" r="406" />
        <circle cx="801" cy="588" r="29.500" />
        <circle cx="1614.500" cy="588" r="29.500" />
        <circle cx="1208" cy="182" r="29.500" />
        <circle cx="1208" cy="995" r="29.500" />
      </g>

      <CadText text="墙平面图" x={756} y={411} step={36} rise={1} />
      <CadText text="混凝基础" x={611} y={590} step={31} rise={0} />
      <CadText text="设备间基础平面图" x={944} y={738} step={35} rise={1} />

      {AXES.map(({ label, x, y }) => (
        <Fragment key={label}>
          <path d={`M${x} ${y - 12}l9 4 3 8-3 8-9 4-9-4-3-8 3-8z`} stroke="#008000" />
          <text x={x} y={y + 6} fill="#fff" fontSize="17" textAnchor="middle">{label}</text>
        </Fragment>
      ))}
      <text x="1381" y="854" fill="#fff" fontSize="17" textAnchor="middle">3240</text>

      {/* axis tripod */}
      <ellipse cx="545.500" cy="954" rx="5" ry="6" fill="#0f0" />
      <path d="M540 945l3 5M547 945l-3 6" stroke="#0f0" />
      <path d="M545 958v-16h-3l5-11 5 11h-3v16z" fill="#00f" />
      <path d="M550 957.500h15v-4l12 6-12 6v-4h-15z" fill="#f00" />
      <path d="M543.500 956.500h7v8h-7z" fill="#d8d8d8" />
      <text x="547" y="931" fill="#00f" fontSize="16" textAnchor="middle">Z</text>
      <text x="583" y="965" fill="#f00" fontSize="16" textAnchor="middle">X</text>
    </svg>
  );
}

function ViewTools() {
  const edge = "#3a4450";
  return (
    <div className="absolute top-0 right-0 flex h-[227px] w-[33px] flex-col items-center rounded-sm border-l border-[#b4b4b8] bg-[#97979b] pt-2.5 pr-0.5">
      <button type="button" aria-label="动态观察">
        <svg viewBox="0 0 26 24" className="h-6 w-[26px]" fill="none">
          <circle cx="12" cy="12" r="9" fill="#8ea2bd" stroke={edge} />
          <path d="M4 15C1 6 10 1 18 5 14 11 9 14 4 15z" fill="#e3eaf3" />
          <path d="M2 18C8 20 20 12 24 5M4 20c6-1 12-6 17-13" stroke={edge} />
          <circle cx="20" cy="7" r="4" fill="#dfe8f2" stroke={edge} />
          <circle cx="3" cy="19" r="2" fill="#777" />
        </svg>
      </button>
      <button type="button" className="mt-1.5 flex h-[23px] w-6 items-end justify-end border border-[#3a4450] bg-[#8393ac] text-[9px] leading-3 text-[#222c38]">2D</button>
      <button type="button" aria-label="前视" className="mt-1.5 h-[23px]">
        <svg viewBox="0 0 24 24" className="h-[23px] w-6" stroke={edge}><path d="M1 6l5-5h17v17l-5 5H1z" fill="#8393ac" /><path d="M1 6h17v17H1z" fill="#cfe5ff" /><path d="M18 6l5-5v17l-5 5z" fill="#cfe5ff" /><path d="M6 6v12M6 18l-5 5M6 18h17" fill="none" /></svg>
      </button>
      <Caret className="mt-1.5 text-[#2c343e]" />
      <button type="button" aria-label="实体" className="mt-1.5 h-[23px]">
        <svg viewBox="0 0 24 24" className="h-[23px] w-6" stroke={edge} fill="#8393ac"><path d="M1 6l5-5h17v17l-5 5H1z" /><path d="M1 6h17v17M18 6l5-5" fill="none" /></svg>
      </button>
      <Caret className="mt-1.5 text-[#2c343e]" />
      <button type="button" aria-label="旋转视图" className="mt-1.5 h-[23px]">
        <svg viewBox="0 0 24 24" className="h-[23px] w-6" fill="none" stroke={edge} strokeWidth="2"><path d="M20 6a10 10 0 1 0 1 11M14 8h8V1" /></svg>
      </button>
      <Caret className="mt-1.5 text-[#2c343e]" />
      <div className="mt-1.5 h-px w-6 shrink-0 bg-[#6c6c70]" />
      <button type="button" aria-label="图层显示" className="mt-1 h-[23px]">
        <svg viewBox="0 0 24 24" className="h-[23px] w-6" fill="none" stroke={edge}><path d="M1 1h22v22H1z" fill="#8393ac" /><path d="M1 4h22M12 9v12M4 6l1.500 2L7 6M15 6l1.500 2L18 6M3.500 10h3v2h-3zM3.500 14h3v2h-3zM3.500 18h3v2h-3zM8 11h2M8 15h2M8 19h2M14.500 10h3v2h-3zM14.500 14h3v2h-3zM14.500 18h3v2h-3zM19 11h2M19 15h2M19 19h2" /></svg>
      </button>
    </div>
  );
}

const statusButton = "flex h-[25px] items-center justify-center gap-1.5 border border-[#989898] bg-[#cfcfd1]";

function StatusBar() {
  return (
    <footer className="flex h-[30px] shrink-0 items-center bg-[#dcdcde] text-[#333]">
      <span className="w-[263px] pl-px text-[13px] whitespace-pre">X = -1975 Y = -5718 Z = 2036</span>
      <span className="w-[84px]">层高： 0.8</span>
      <span className="w-[133px]">标高： -0.9~-0.1</span>
      <span className="w-[103px]">0</span>
      <span className="w-[103px]">隐藏：0</span>
      <div className="flex items-center gap-[3px]">
        <button type="button" aria-label="正交" className={`${statusButton} w-[25px]`}>
          <svg viewBox="0 0 14 14" className="size-3.5" fill="none" stroke="#444"><path d="M2.500 1v11.500H14M2.500 8.500h4v4" /></svg>
        </button>
        <button type="button" aria-label="点选" className="flex h-[25px] w-9 items-center justify-center gap-1 border border-[#3f97ee] bg-white">
          <svg viewBox="0 0 16 16" className="size-4" fill="none"><path d="M2.500 2.500h12v12h-12z" stroke={B} strokeWidth="1.500" /><path d="M.5 .5h4v4h-4z" fill="#f7b58a" stroke={O} /></svg>
          <Caret />
        </button>
        <button type="button" aria-label="交点" className={`${statusButton} mx-[3px] w-[25px]`}>
          <svg viewBox="0 0 16 16" className="size-4" stroke="#8a8a8a"><path d="M1 1l14 14M15 1L1 15" /></svg>
        </button>
        <button type="button" aria-label="垂点" className={`${statusButton} w-9`}>
          <svg viewBox="0 0 16 14" className="h-3.5 w-4" fill="none" stroke="#333"><path d="M13 1L2 12.500h12" /><circle cx="7" cy="7" r="1.500" fill="#333" /></svg>
          <Caret />
        </button>
        <button type="button" aria-label="偏移点" className={`${statusButton} w-9`}>
          <svg viewBox="0 0 18 14" className="h-3.5 w-[18px]" fill="none" stroke="#333"><path d="M4.500 0v8M.5 4h8" /><path d="M7 9.500h9v3H7z" fill="#333" /></svg>
          <Caret />
        </button>
        <button type="button" className={`${statusButton} w-[73px]`}>跨图层选择</button>
        <button type="button" className={`${statusButton} w-[61px]`}>折线选择</button>
      </div>
      <span className="ml-1.5">按鼠标左键指定第一个角点，或拾取构件图元</span>
      <span className="mr-[29px] ml-auto">1000 FPS</span>
    </footer>
  );
}

function Taskbar() {
  return (
    <div className="flex h-[7px] shrink-0 items-end overflow-hidden border-t border-[#2b4152] bg-linear-to-r from-[#16598c] via-[#4ba3dc] via-25% to-[#173f78]">
      <span className="ml-3 h-1.5 w-7 rounded-t-full bg-[#b8c9d6]" />
      <span className="ml-[52px] h-1 w-2 rounded-t-full bg-[#f2d21f]" />
      <span className="ml-5 h-1.5 w-[60px] rounded-t-xs bg-[#a6d4ea]" />
      <span className="ml-[65px] flex h-1.5 w-[59px] items-end justify-center rounded-t-xs bg-[#9fcbe6]">
        <span className="h-1 w-8 rounded-t-xs bg-[#5f7f9c]" />
      </span>
      <span className="ml-0.5 flex h-1.5 w-[60px] items-end justify-center rounded-t-xs bg-[#d6e9f8]">
        <span className="h-1 w-8 rounded-t-xs bg-[#6aaaf2]" />
      </span>
      <span className="ml-[3px] flex h-1.5 w-[58px] items-end justify-center rounded-t-xs bg-[#b5dbec]">
        <span className="h-1 w-1.5 bg-[#f2e02f]" />
      </span>
      <span className="mr-0.5 ml-auto h-1.5 w-3 border border-[#9fb4cf] bg-[#49688f]" />
    </div>
  );
}

export default function App() {
  return (
    <div className="flex h-screen flex-col overflow-hidden bg-white font-['Noto_Sans','Noto_Sans_CJK_SC',sans-serif] text-xs text-black">
      <TitleBar />
      <Ribbon />
      <SelectorBar />
      <main className="flex min-h-0 flex-1">
        <NavTree />
        <div className="ml-1 flex w-[280px] shrink-0 flex-col gap-1">
          <ComponentList />
          <PropertyList />
        </div>
        <div className="flex w-1 shrink-0 items-center">
          <div className="h-[99px] w-full bg-[#5f6a75]" />
        </div>
        <div className="relative min-w-0 flex-1 overflow-hidden bg-black">
          <Viewport />
          <ViewTools />
        </div>
      </main>
      <StatusBar />
      <Taskbar />
    </div>
  );
}
